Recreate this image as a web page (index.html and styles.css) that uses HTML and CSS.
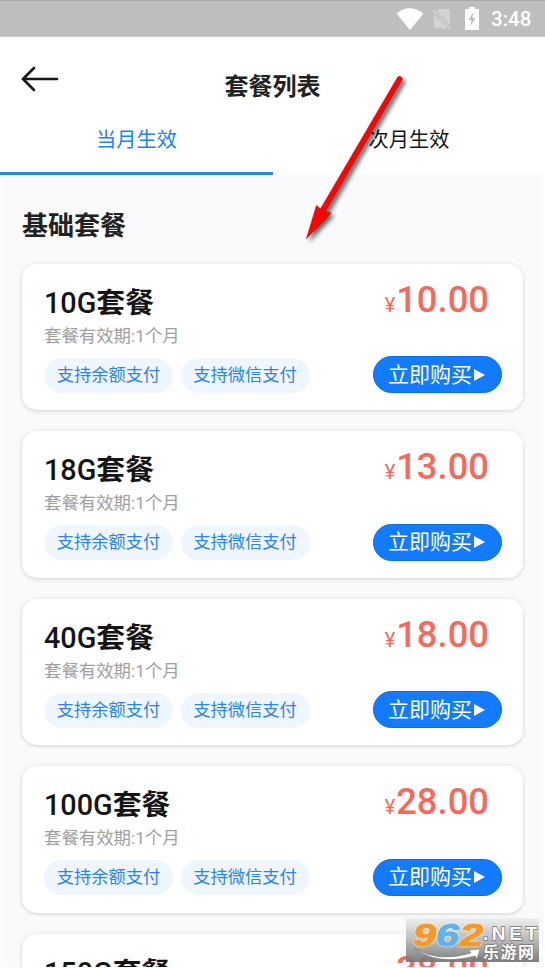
FILE: index.html
```html
<!DOCTYPE html>
<html lang="zh-CN">
<head>
<meta charset="utf-8">
<title>套餐列表</title>
<link rel="stylesheet" href="styles.css">
</head>
<body>
<div class="screen">
  <div class="status">
    <svg class="wifi" viewBox="0 0 28 22"><path d="M0.5 5.5Q13.500-5 27.500 5.500L14 22Z" fill="#fff"/></svg>
    <svg class="sim" viewBox="0 0 20 22"><path d="M8 1H16Q18 1 18 3V17L5 3ZM2 6L16 20.500H4Q2 20.500 2 19Z" fill="#d3d3d3"/><path d="M1 2L19 21" stroke="#d3d3d3" stroke-width="1.500"/></svg>
    <svg class="battery" viewBox="0 0 14 23"><path d="M4 0H10V2H14V23H0V2H4Z" fill="#fff"/><path d="M8.500 5L3.500 13H6.500L5.500 19L10.500 11H7.500Z" fill="#bdbdbd"/></svg>
    <span class="clock">3:48</span>
  </div>
  <header class="header">
    <svg class="back" viewBox="0 0 38 26"><path d="M13 2L2 13L13 24M2 13H36" fill="none" stroke="#171717" stroke-width="2.700" stroke-linecap="round"/></svg>
    <h1>套餐列表</h1>
  </header>
  <nav class="tabs">
    <div class="tab active">当月生效</div>
    <div class="tab">次月生效</div>
  </nav>
  <main class="content">
    <h2>基础套餐</h2>
    <section class="card">
      <div class="info"><h3>10G<b>套餐</b></h3><p>套餐有效期:1个月</p><div class="tags"><span>支持余额支付</span><span>支持微信支付</span></div></div>
      <div class="side"><div class="price"><small>¥</small>10.00</div><div class="buy">立即购买<i></i></div></div>
    </section>
    <section class="card">
      <div class="info"><h3>18G<b>套餐</b></h3><p>套餐有效期:1个月</p><div class="tags"><span>支持余额支付</span><span>支持微信支付</span></div></div>
      <div class="side"><div class="price"><small>¥</small>13.00</div><div class="buy">立即购买<i></i></div></div>
    </section>
    <section class="card">
      <div class="info"><h3>40G<b>套餐</b></h3><p>套餐有效期:1个月</p><div class="tags"><span>支持余额支付</span><span>支持微信支付</span></div></div>
      <div class="side"><div class="price"><small>¥</small>18.00</div><div class="buy">立即购买<i></i></div></div>
    </section>
    <section class="card">
      <div class="info"><h3>100G<b>套餐</b></h3><p>套餐有效期:1个月</p><div class="tags"><span>支持余额支付</span><span>支持微信支付</span></div></div>
      <div class="side"><div class="price"><small>¥</small>28.00</div><div class="buy">立即购买<i></i></div></div>
    </section>
    <section class="card">
      <div class="info"><h3>150G<b>套餐</b></h3></div>
      <div class="side"><div class="price"><small>¥</small>38.00</div></div>
    </section>
  </main>
  <svg class="pointer" viewBox="0 0 120 190">
    <path d="M106.500 8.500Q109.500 5.500 111.500 10L34.500 142.500L40 144L15.500 169.500L25.500 136.500L29.500 140Z" fill="#f80606" stroke="#c80000" stroke-width=".6" stroke-linejoin="round"/>
  </svg>
  <svg class="watermark" viewBox="0 0 133 44">
    <defs>
      <linearGradient id="plate" x1="0" y1="0" x2="0" y2="1"><stop offset="0" stop-color="#ededed" stop-opacity=".85"/><stop offset="1" stop-color="#747474" stop-opacity=".92"/></linearGradient>
    </defs>
    <rect width="133" height="44" fill="url(#plate)"/>
    <g class="digits">
      <text x="7" y="28" textLength="23" lengthAdjust="spacingAndGlyphs" fill="#f59a28" stroke="#f59a28">9</text>
      <text x="30" y="28" textLength="23" lengthAdjust="spacingAndGlyphs" fill="#62b4e7" stroke="#62b4e7">6</text>
      <text x="54" y="28" textLength="23" lengthAdjust="spacingAndGlyphs" fill="#f59a28" stroke="#f59a28">2</text>
    </g>
    <text class="net" x="77" y="22" textLength="54">.NET</text>
    <text class="site" x="77" y="40" textLength="51">乐游网</text>
    <path d="M8 30Q32 45 65 35L63 32L74 31L71 41L69 38Q31 48 8 30Z" fill="#fff" stroke="#777" stroke-width=".6"/>
  </svg>
</div>
</body>
</html>
```
FILE: styles.css
```css
* { box-sizing: border-box; }
body, h1, h2, h3, p { margin: 0; }
body { background: #fff; color: #151515; font-family: Roboto, "Noto Sans CJK SC", sans-serif; }
.screen { position: relative; width: 545px; height: 968px; overflow: hidden; }
.status { height: 37px; background: #bebebe; border-top: 1px solid #aaa; border-bottom: 1px solid #c8c8c8; display: flex; align-items: center; justify-content: flex-end; padding-right: 12px; color: #fff; }
.wifi { width: 28px; height: 22px; }
.sim { width: 20px; height: 22px; margin-left: 8px; }
.battery { width: 14px; height: 23px; margin-left: 13px; }
.clock { width: 42px; margin-left: 12px; font-size: 20.500px; font-weight: 500; line-height: 34px; padding-top: 1px; white-space: nowrap; }
.header { height: 77px; display: grid; grid-template-columns: 60px 1fr 60px; padding: 0 21px; }
.back { width: 38px; height: 26px; margin-top: 29px; }
h1 { font-size: 24px; font-weight: 600; line-height: 36px; text-align: center; padding-top: 32px; color: #222; }
.tabs { height: 61px; display: flex; }
.tab { flex: 1; text-align: center; font-size: 20.200px; line-height: 30px; padding-top: 11px; border-bottom: 3px solid transparent; }
.tab.active { color: #2082f4; border-color: #258bdc; flex: 0 0 273px; }
.content { height: 793px; padding: 31px 20px 0; background: #fafafc; border: solid #fdfdfe; border-width: 0 2px 1px; overflow: hidden; }
h2 { font-size: 26px; font-weight: 700; line-height: 40px; margin-bottom: 18px; color: #222; }
.card { height: 146.400px; display: flex; justify-content: space-between; padding: 22px 21px 0 22px; margin-bottom: 21px; background: #fff; border-radius: 15px; box-shadow: 0 1px 4px rgba(0,0,0,.17); }
h3 { font-size: 28.800px; font-weight: 500; line-height: 34px; white-space: nowrap; }
h3 b { font-weight: 700; }
p { font-size: 17.400px; line-height: 24px; margin-top: 4px; color: #a0a0a0; }
.tags { display: flex; gap: 7.500px; margin-top: 10px; }
.tags span { width: 129px; height: 35px; border-radius: 18px; background: #f0f6ff; color: #2b84f0; font-size: 17.300px; line-height: 34px; text-align: center; }
.side { display: flex; flex-direction: column; align-items: flex-end; }
.price { color: #f66a5d; font-size: 36.400px; line-height: 42px; font-weight: 500; margin: -7px 13px 0 0; white-space: nowrap; }
.price small { font-size: 20px; font-weight: 400; margin-right: 1px; }
.buy { width: 129px; height: 37px; margin-top: 35px; display: flex; align-items: center; padding-left: 14px; border-radius: 19px; background: #127bff; border: 1px solid #0870e4; color: #fff; font-size: 21px; line-height: 36px; white-space: nowrap; }
.price + .buy { margin-top: auto; margin-bottom: 17px; }
.buy i { border: solid transparent; border-width: 6px 0 6px 11px; border-left-color: #fff; margin-left: 2px; }
.pointer { position: absolute; left: 291px; top: 69px; width: 120px; height: 190px; filter: drop-shadow(3px 3px 2px rgba(0,0,0,.6)); }
.watermark { position: absolute; left: 406px; top: 918px; width: 133px; height: 44px; }
.digits { font: italic 700 32px "Liberation Sans", sans-serif; stroke-width: 1.200px; filter: drop-shadow(0 0 1px #fff); }
.net { font: 700 19px "Liberation Sans", sans-serif; fill: #fff; stroke: #777; stroke-width: 1.500px; paint-order: stroke; }
.site { font: 700 16px "Noto Sans CJK SC", sans-serif; fill: #fff; stroke: #777; stroke-width: 1.500px; paint-order: stroke; }
```
